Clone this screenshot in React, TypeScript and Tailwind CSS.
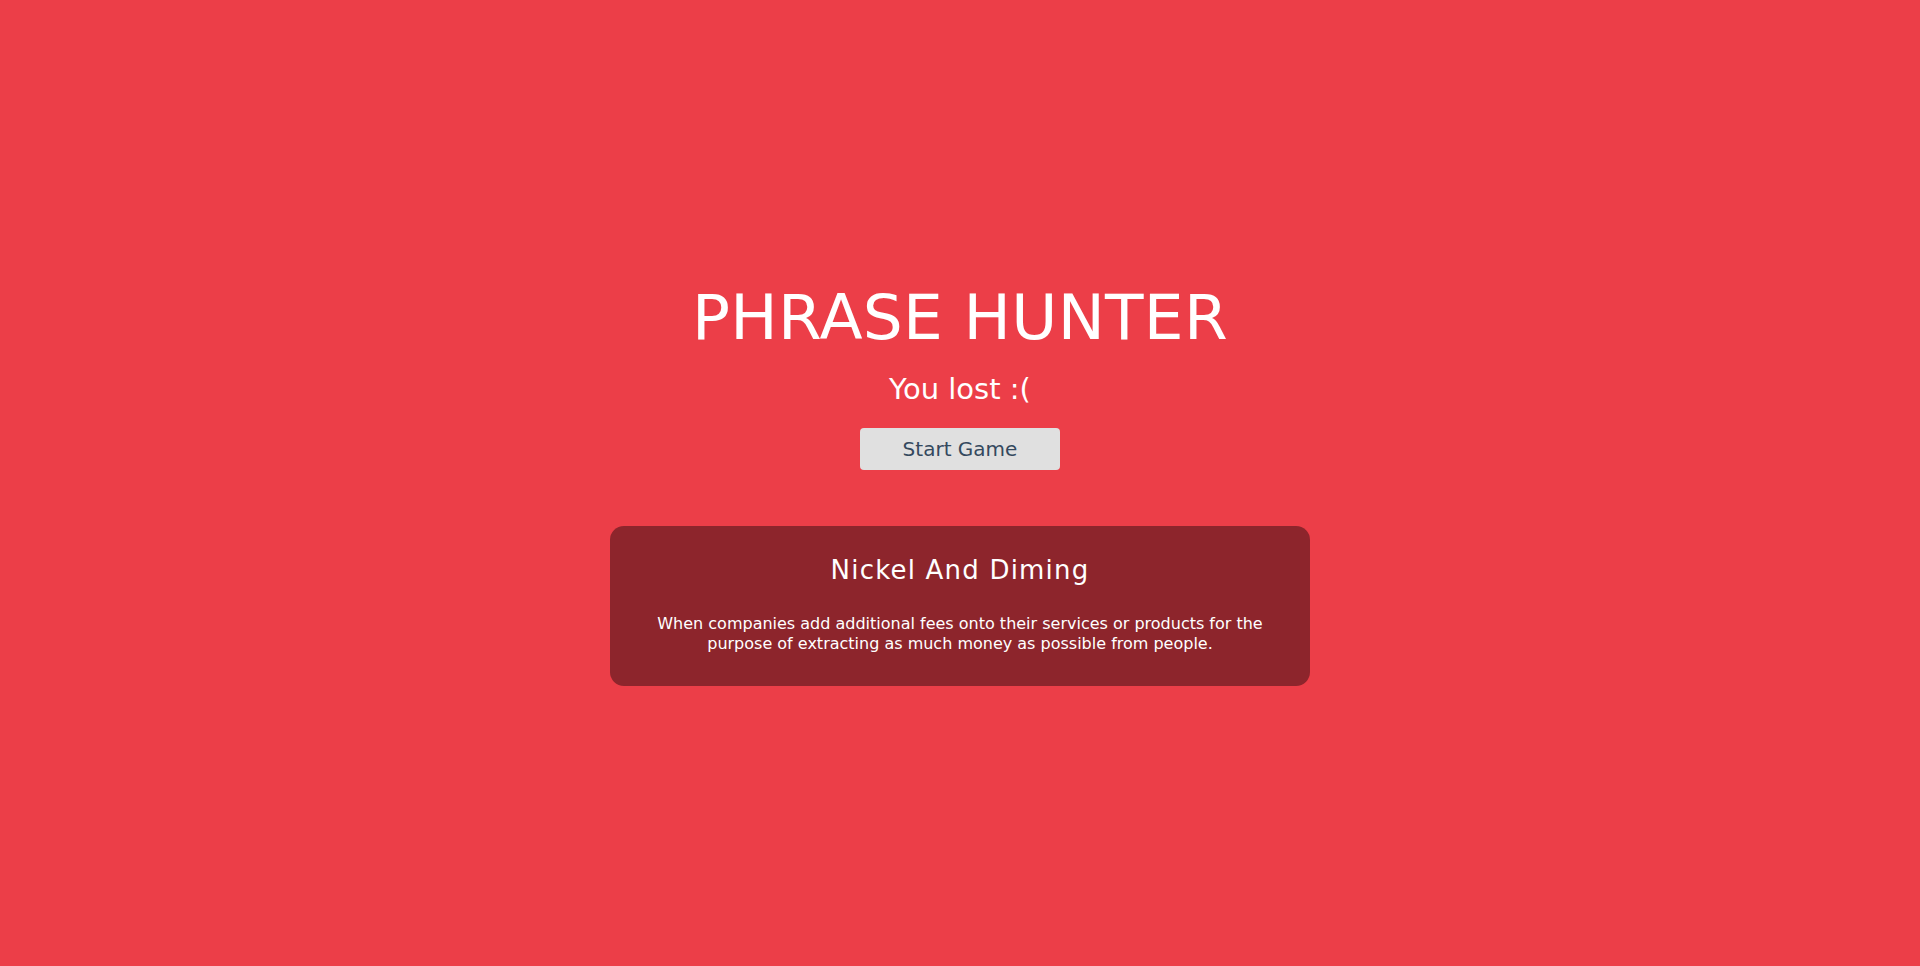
import React from "react";

const App = () => {
  return (
    <main
      className="min-h-screen w-full bg-[#ec3e48] flex flex-col items-center justify-center pt-[6px] text-white"
      style={{ fontFamily: '"DejaVu Sans", "Open Sans", sans-serif' }}
    >
      {/* header */}
      <h1 className="text-[63px] font-normal leading-none tracking-[0.3px]">PHRASE HUNTER</h1>
      <h2 className="mt-[26px] text-[29px] font-normal leading-none">You lost :(</h2>
      <button className="mt-[24px] w-[200px] h-[42px] rounded-[4px] bg-[#e0e0e0] text-[#34495e] text-[20px] leading-none">
        Start Game
      </button>

      {/* phrase card */}
      <section className="mt-[56px] w-[700px] rounded-[14px] bg-[#8d252c] px-[40px] pt-[31px] pb-[33px] text-center">
        <h3 className="text-[26px] font-normal leading-none tracking-[1.2px]">Nickel And Diming</h3>
        <p className="mt-[31px] text-[16px] leading-[19.5px]">
          When companies add additional fees onto their services or products for the
          <br />
          purpose of extracting as much money as possible from people.
        </p>
      </section>
    </main>
  );
};

export default App;
